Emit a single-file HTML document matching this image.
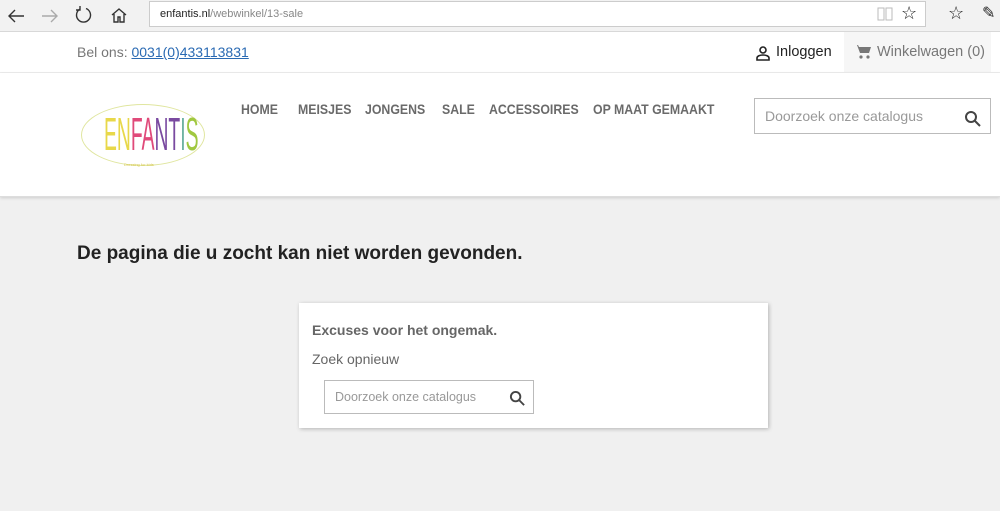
<!DOCTYPE html>
<html><head><style>
body{margin:0;width:1000px;height:511px;background:#f0f0f0;font-family:"Liberation Sans",sans-serif;position:relative;overflow:hidden}
.a{position:absolute}
.bar{top:0;left:0;width:1000px;height:31px;background:#f2f2f2;border-bottom:1px solid #d8d8d8}
.url{left:149px;top:1px;width:777px;height:26px;background:#fff;border:1px solid #ccc;box-sizing:border-box;font-size:11px;line-height:25px;padding-left:10px;color:#222}
.top{top:32px;left:0;width:1000px;height:40px;background:#fff;border-bottom:1px solid #eee}
.hdr{top:73px;left:0;width:1000px;height:123px;background:#fff;border-bottom:1px solid #ddd;box-shadow:0 1px 3px rgba(0,0,0,.15)}
.nav{top:101px;font-size:14px;font-weight:bold;color:#6a6a6a;transform:scaleX(.88);transform-origin:left}
.srch{border:1px solid #bbb;background:#fff;box-sizing:border-box;color:#999;font-size:14px}
</style></head><body>
<div class="a bar"></div>
<svg class="a" style="left:6px;top:6px" width="20" height="20" viewBox="0 0 20 20" fill="none" stroke="#333" stroke-width="1.4"><path d="M3 10h15M9 4l-6 6 6 6"/></svg>
<svg class="a" style="left:40px;top:6px" width="20" height="20" viewBox="0 0 20 20" fill="none" stroke="#aaa" stroke-width="1.4"><path d="M2 10h15M11 4l6 6-6 6"/></svg>
<svg class="a" style="left:74px;top:5px" width="20" height="20" viewBox="0 0 20 20" fill="none" stroke="#333" stroke-width="1.4"><path d="M6 4A7 7 0 1 0 12 3.5M6 1v4h-4"/></svg>
<svg class="a" style="left:110px;top:6px" width="18" height="18" viewBox="0 0 18 18" fill="none" stroke="#333" stroke-width="1.4"><path d="M2 9l7-6 7 6M4 8v8h4v-5h2v5h4V8"/></svg>
<div class="a url"><span style="color:#222">enfantis.nl</span><span style="color:#888">/webwinkel/13-sale</span></div>
<svg class="a" style="left:877px;top:7px" width="16" height="14" viewBox="0 0 16 14" fill="none" stroke="#bbb"><path d="M1 1h6v12H1zM9 1h6v12H9z"/></svg>
<div class="a" style="left:901px;top:3px;font-size:18px;color:#222">☆</div>
<div class="a" style="left:948px;top:3px;font-size:18px;color:#222">☆</div>
<div class="a" style="left:982px;top:3px;font-size:16px;color:#222">✎</div>
<div class="a top"></div>
<div class="a" style="left:77px;top:44px;font-size:14px;color:#777">Bel ons: <span style="color:#2a6ab3;text-decoration:underline">0031(0)433113831</span></div>
<svg class="a" style="left:755px;top:45px" width="16" height="16" viewBox="0 0 16 16" fill="none" stroke="#222" stroke-width="1.6"><circle cx="8" cy="5" r="3"/><path d="M2 15v-2c0-2 3-3 6-3s6 1 6 3v2z"/></svg>
<div class="a" style="left:776px;top:44px;font-size:14.5px;color:#222">Inloggen</div>
<div class="a" style="left:844px;top:32px;width:147px;height:40px;background:#f6f6f6"></div>
<svg class="a" style="left:854px;top:44px" width="18" height="16" viewBox="0 0 18 16" fill="#777"><path d="M0 1h3l3 8h9l2-6H5l-1-2H0z"/><circle cx="7" cy="13" r="1.6"/><circle cx="14" cy="13" r="1.6"/></svg>
<div class="a" style="left:877px;top:44px;font-size:14.5px;color:#777">Winkelwagen (0)</div>
<div class="a hdr"></div>
<div class="a" style="left:81px;top:104px;width:122px;height:60px;border:1px solid #e0e6a0;border-radius:50%"></div>
<div class="a" style="left:104px;top:111px;font-size:46px;line-height:46px;transform:scaleX(.42);transform-origin:left;font-weight:300"><span style="color:#e8d84a">EN</span><span style="color:#e04a7a">FA</span><span style="color:#7a4aa0">NT</span><span style="color:#6ab0a0">I</span><span style="color:#a0c840">S</span></div>
<div class="a" style="left:124px;top:162px;font-size:4px;color:#d8c850">Dressing for kids</div>
<div class="a nav" style="left:241px">HOME</div>
<div class="a nav" style="left:298px">MEISJES</div>
<div class="a nav" style="left:365px">JONGENS</div>
<div class="a nav" style="left:442px">SALE</div>
<div class="a nav" style="left:489px">ACCESSOIRES</div>
<div class="a nav" style="left:593px">OP MAAT GEMAAKT</div>
<div class="a srch" style="left:754px;top:98px;width:237px;height:36px;padding:9px 10px">Doorzoek onze catalogus</div>
<svg class="a" style="left:964px;top:110px" width="18" height="18" viewBox="0 0 18 18" fill="none" stroke="#444" stroke-width="2"><circle cx="7" cy="7" r="5"/><path d="M11 11l5 5"/></svg>
<div class="a" style="left:77px;top:243px;font-size:19px;font-weight:bold;color:#222">De pagina die u zocht kan niet worden gevonden.</div>
<div class="a" style="left:299px;top:303px;width:469px;height:125px;background:#fff;box-shadow:1px 1px 4px rgba(0,0,0,.25)"></div>
<div class="a" style="left:312px;top:322px;font-size:14px;font-weight:bold;color:#666">Excuses voor het ongemak.</div>
<div class="a" style="left:312px;top:351px;font-size:14px;color:#666">Zoek opnieuw</div>
<div class="a srch" style="left:324px;top:380px;width:210px;height:34px;padding:9px 10px;font-size:12.5px">Doorzoek onze catalogus</div>
<svg class="a" style="left:509px;top:390px" width="17" height="17" viewBox="0 0 18 18" fill="none" stroke="#444" stroke-width="2"><circle cx="7" cy="7" r="5"/><path d="M11 11l5 5"/></svg>
</body></html>
